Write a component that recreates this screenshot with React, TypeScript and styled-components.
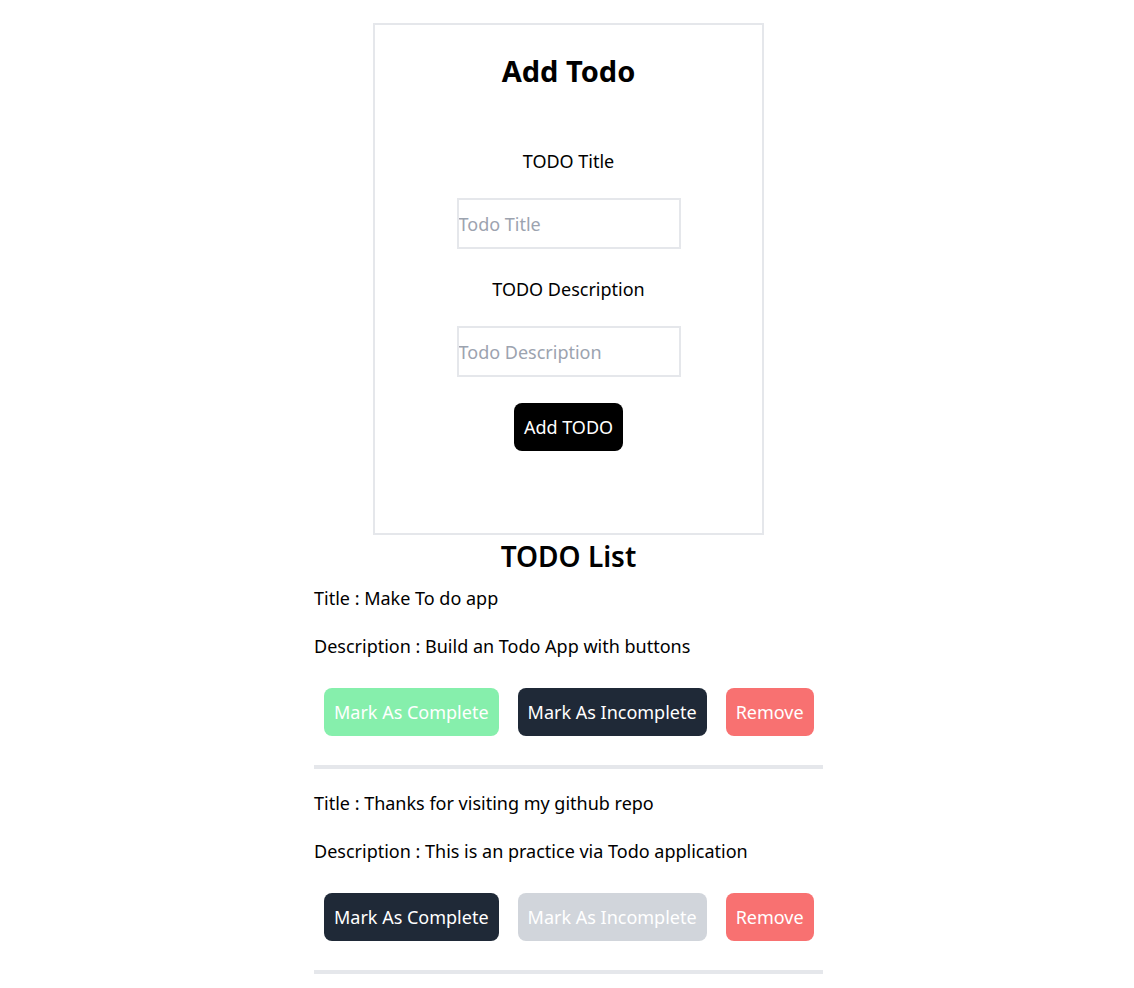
import React, { useState } from 'react';
import styled, { createGlobalStyle } from 'styled-components';

type TodoType = {
    title: string
    description: string
    completed: boolean
}

const GlobalStyle = createGlobalStyle`
    body {
        margin: 0;
        font-family: "Noto Sans", "Open Sans", sans-serif;
        color: #000;
        background: #fff;
    }
    * {
        box-sizing: border-box;
    }
`

const initialTodos: TodoType[] = [
    {title: 'Make To do app', description: 'Build an Todo App with buttons', completed: true},
    {title: 'Thanks for visiting my github repo', description: 'This is an practice via Todo application', completed: false},
]

const App = () => {
    const [todos, setTodos] = useState<TodoType[]>(initialTodos)
    const [title, setTitle] = useState('')
    const [description, setDescription] = useState('')

    const addTodo = () => {
        if (!title) return
        setTodos([...todos, {title, description, completed: false}])
        setTitle('')
        setDescription('')
    }

    const setCompleted = (index: number, completed: boolean) => {
        setTodos(todos.map((t, i) => i === index ? {...t, completed} : t))
    }

    const removeTodo = (index: number) => {
        setTodos(todos.filter((_, i) => i !== index))
    }

    return (
        <Page>
            <GlobalStyle/>
            <Card>
                <Heading>Add Todo</Heading>
                <Label htmlFor="title" $top={58}>TODO Title</Label>
                <Input id="title" placeholder="Todo Title" value={title}
                       onChange={e => setTitle(e.target.value)}/>
                <Label htmlFor="description" $top={26}>TODO Description</Label>
                <Input id="description" placeholder="Todo Description" value={description}
                       onChange={e => setDescription(e.target.value)}/>
                <AddButton onClick={addTodo}>Add TODO</AddButton>
            </Card>
            <ListHeading>TODO List</ListHeading>
            <List>
                {todos.map((todo, i) => (
                    <Item key={i}>
                        <Text>Title : {todo.title}</Text>
                        <Text $top={20}>Description : {todo.description}</Text>
                        <Actions>
                            <ActionButton $bg={todo.completed ? '#86efac' : '#1f2937'}
                                          disabled={todo.completed}
                                          onClick={() => setCompleted(i, true)}>
                                Mark As Complete
                            </ActionButton>
                            <ActionButton $bg={todo.completed ? '#1f2937' : '#d1d5db'}
                                          disabled={!todo.completed}
                                          onClick={() => setCompleted(i, false)}>
                                Mark As Incomplete
                            </ActionButton>
                            <ActionButton $bg="#f87171" onClick={() => removeTodo(i)}>
                                Remove
                            </ActionButton>
                        </Actions>
                        <Divider/>
                    </Item>
                ))}
            </List>
        </Page>
    );
};

export default App;

const Page = styled.div`
    display: flex;
    flex-direction: column;
    align-items: center;
    padding-top: 23px;
    padding-left: 3px;
`

const Card = styled.div`
    width: 391px;
    height: 512px;
    border: 2px solid #e5e7eb;
    display: flex;
    flex-direction: column;
    align-items: center;
    padding-top: 28px;
`

const Heading = styled.h1`
    margin: 0;
    font-size: 29px;
    line-height: 36px;
    font-weight: 700;
`

const Label = styled.label<{ $top: number }>`
    margin-top: ${(props) => props.$top}px;
    font-size: 18px;
    line-height: 28px;
`

const Input = styled.input`
    margin-top: 23px;
    width: 224px;
    height: 51px;
    border: 2px solid #e5e7eb;
    padding: 1px 0 0;
    font-family: inherit;
    font-size: 18px;
    outline: none;

    &::placeholder {
        color: #9ca3af;
    }
`

const AddButton = styled.button`
    margin-top: 26px;
    background: #000;
    color: #fff;
    border: none;
    border-radius: 8px;
    padding: 10px;
    font-family: inherit;
    font-size: 18px;
    line-height: 28px;
    cursor: pointer;
`

const ListHeading = styled.h2`
    margin: 3px 0 0;
    font-size: 28px;
    line-height: 36px;
    font-weight: 600;
`

const List = styled.div`
    width: 509px;
    margin-top: 10px;
    display: flex;
    flex-direction: column;
`

const Item = styled.div`
    display: flex;
    flex-direction: column;
`

const Text = styled.p<{ $top?: number }>`
    margin: ${(props) => props.$top || 0}px 0 0;
    font-size: 18px;
    line-height: 28px;
`

const Actions = styled.div`
    display: flex;
    gap: 19px;
    padding-left: 10px;
    margin-top: 28px;
`

const ActionButton = styled.button<{ $bg: string }>`
    background: ${(props) => props.$bg};
    color: #fff;
    border: none;
    border-radius: 8px;
    padding: 10px;
    font-family: inherit;
    font-size: 18px;
    line-height: 28px;
    cursor: pointer;
`

const Divider = styled.div`
    height: 4px;
    background: #e5e7eb;
    margin: 29px 0 20px;
`
